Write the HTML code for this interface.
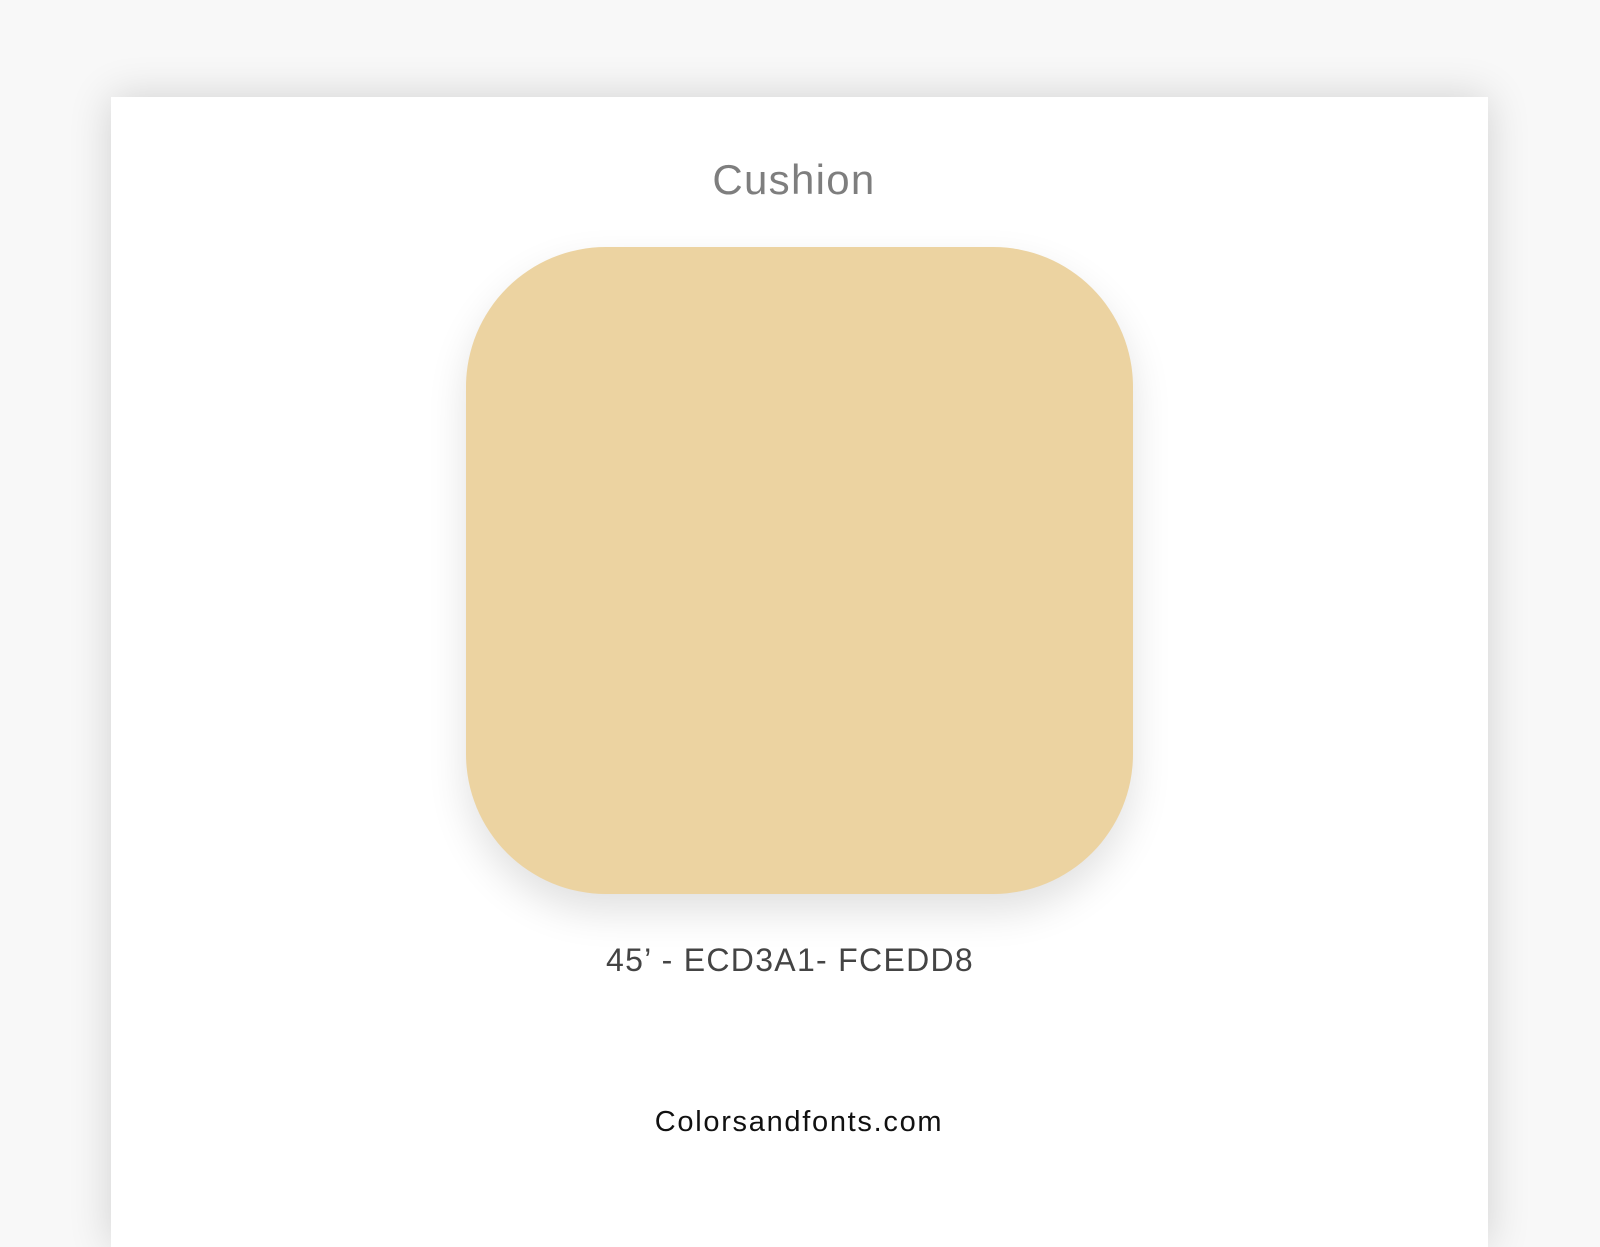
<!DOCTYPE html>
<html><head><meta charset="utf-8"><style>
html,body{margin:0;padding:0;width:1600px;height:1200px;overflow:hidden;background:#f8f8f8;font-family:"Liberation Sans",sans-serif;}
.card{position:absolute;left:111px;top:97px;width:1377px;height:1150px;background:#fff;box-shadow:0 0 40px rgba(0,0,0,0.16);}
.title{position:absolute;left:0;width:1588px;top:156px;text-align:center;font-size:42px;color:#7e7e7e;letter-spacing:1.3px;}
.sq{position:absolute;left:466px;top:247px;width:667px;height:647px;border-radius:140px;background:#ecd3a1;box-shadow:0 18px 40px rgba(0,0,0,0.12);}
.hex{position:absolute;left:0;width:1580px;top:942px;text-align:center;font-size:32px;color:#444;letter-spacing:1.3px;}
.site{position:absolute;left:0;width:1598px;top:1106px;text-align:center;font-size:29px;color:#111;letter-spacing:1.7px;}
</style></head><body>
<div class="card"></div>
<div class="title">Cushion</div>
<div class="sq"></div>
<div class="hex">45’ - ECD3A1- FCEDD8</div>
<div class="site">Colorsandfonts.com</div>
</body></html>
